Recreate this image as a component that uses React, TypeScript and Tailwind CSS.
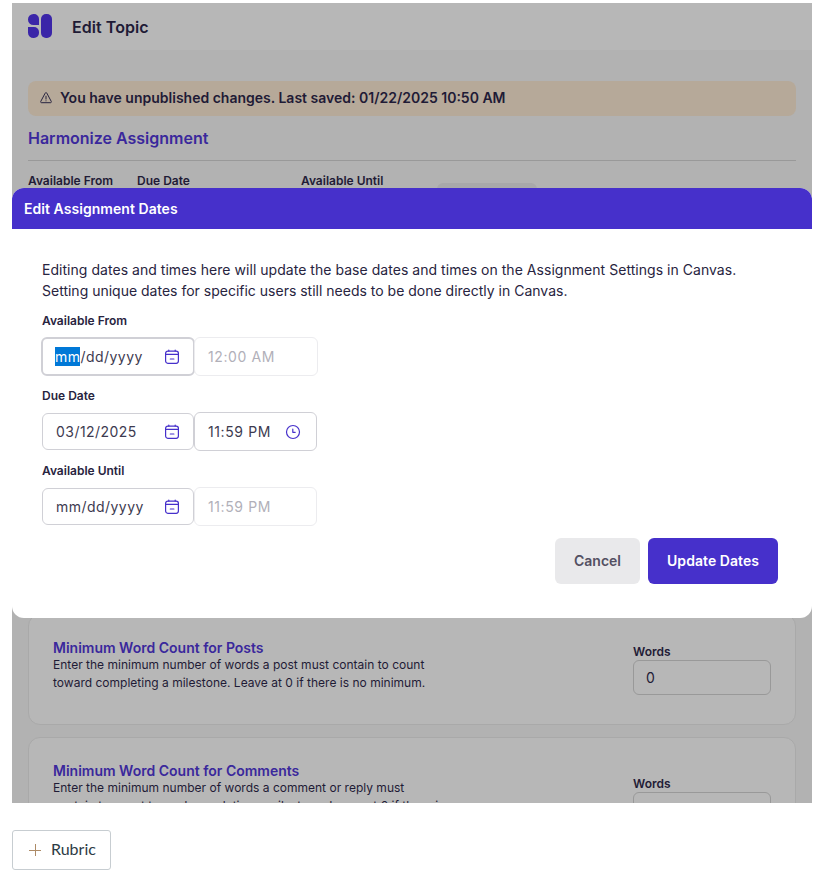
import React from "react";

function Logo() {
  return (
    <svg width="24" height="24" viewBox="0 0 24 24" fill="#3a25a8" className="-mt-[2px] block">
      <path d="M5.5 0h.5a5 5 0 0 1 5 5V11H5.5a5.5 5.5 0 0 1 0-11Z" />
      <path d="M0 13h6a5 5 0 0 1 5 5v1a5 5 0 0 1-5 5H5.5A5.5 5.5 0 0 1 0 18.5V13Z" />
      <rect x="13" y="0" width="11" height="24" rx="5" />
    </svg>
  );
}

function WarningIcon() {
  return (
    <svg width="12" height="12" viewBox="0 0 12 12" fill="none" stroke="#282440" strokeLinejoin="round" strokeLinecap="round" className="block">
      <path d="M5.2 1.1a.9.9 0 0 1 1.6 0l4.5 8.4a.8.8 0 0 1-.7 1.2H1.4a.8.8 0 0 1-.7-1.2Z" />
      <path d="M6 4.2v2.9M6 8.8v.1" />
    </svg>
  );
}

function CalendarIcon() {
  return (
    <svg width="16" height="16" viewBox="0 0 16 16" fill="none" stroke="#4630cb" strokeWidth="1.2" strokeLinecap="round" className="block">
      <rect x="1.6" y="2.1" width="12.8" height="12.2" rx="2.2" />
      <path d="M1.6 5.4h12.8M4.8 1.1v1M11.2 1.1v1M6.3 10h3.6" />
    </svg>
  );
}

function ClockIcon() {
  return (
    <svg width="16" height="16" viewBox="0 0 16 16" fill="none" stroke="#4630cb" strokeWidth="1.2" strokeLinecap="round" strokeLinejoin="round" className="block">
      <circle cx="8" cy="8" r="6.5" />
      <path d="M7.8 5.2v3.1h2.4" />
    </svg>
  );
}

type DateRowProps = {
  label: string;
  date: React.ReactNode;
  time: string;
  focused?: boolean;
  disabled?: boolean;
};

function DateRow({ label, date, time, focused, disabled }: DateRowProps) {
  return (
    <div className="h-[75px]">
      <div className="h-[18px] text-xs leading-[18px] font-semibold">{label}</div>
      <div className="mt-[7px] flex h-[39px] items-center text-sm text-[#3d3a50]">
        <div
          className={
            focused
              ? "-ml-px flex h-[39px] w-[154px] items-center justify-between rounded-md border-2 border-[#d0d0d6] pr-[13px] pl-[12px]"
              : "flex h-[37px] w-[152px] items-center justify-between rounded-md border border-[#d0d0d6] pr-[13px] pl-[13px]"
          }
        >
          <span className="whitespace-nowrap tracking-[0.46px]">{date}</span>
          <CalendarIcon />
        </div>
        <div
          className={
            disabled
              ? `flex h-[39px] items-center rounded-md border border-[#ececef] text-[#b1b0b9] ${focused ? "w-[124px] -ml-px pl-[13px]" : "w-[123px] pl-[13px]"}`
              : "flex h-[39px] w-[123px] items-center justify-between rounded-md border border-[#d0d0d6] pr-[15px] pl-[13px]"
          }
        >
          <span className="whitespace-nowrap tracking-[0.6px]">{time}</span>
          {!disabled && <ClockIcon />}
        </div>
      </div>
    </div>
  );
}

type WordCountCardProps = {
  title: string;
  lines: string[];
  value: string;
  wordsOffset: string;
  height: string;
};

function WordCountCard({ title, lines, value, wordsOffset, height }: WordCountCardProps) {
  return (
    <div className={`flex shrink-0 justify-between rounded-xl border border-[#a9a9a9] bg-[#b7b7b7] pr-[24px] pl-[24px] ${height}`}>
      <div className="pt-[23px]">
        <div className="text-sm leading-5 font-semibold text-[#3a289c]">{title}</div>
        <div className="-mt-[2px] text-xs leading-[18px] tracking-[0.01px] whitespace-nowrap">
          {lines.map((line) => (
            <div key={line}>{line}</div>
          ))}
        </div>
      </div>
      <div className={`w-[138px] ${wordsOffset}`}>
        <div className="h-[17px] text-xs leading-[18px] font-semibold">Words</div>
        <div className="flex h-[35px] items-center rounded-md border border-[#999999] pl-[12px] text-sm">{value}</div>
      </div>
    </div>
  );
}

export default function App() {
  return (
    <div className="h-[883px] w-[824px] overflow-hidden bg-white pt-[3px] pl-3 font-['Inter','Liberation_Sans',sans-serif] text-[#1f1b36]">
      <div className="relative h-[800px] w-[800px] overflow-hidden bg-[#b2b2b2]">
        <div className="flex h-[48px] items-center border-b border-[#b2b2b2] bg-[#b7b7b7] pl-4">
          <Logo />
          <div className="ml-5 text-base font-semibold tracking-[0.05px]">Edit Topic</div>
        </div>
        <div className="flex h-[752px] flex-col px-4 pt-[30px]">
          <div className="flex h-[35px] shrink-0 items-center gap-[8px] rounded-lg bg-[#b6a999] pb-[2px] pl-[12px] text-sm font-semibold">
            <WarningIcon />
            <span>You have unpublished changes. Last saved: 01/22/2025 10:50 AM</span>
          </div>
          <div className="mt-[10px] h-[35px] shrink-0 border-b border-[#999999] text-base leading-6 font-semibold text-[#3a289c]">
            Harmonize Assignment
          </div>
          <div className="flex h-[453px] shrink-0 pt-[11px] text-xs leading-[18px] font-semibold">
            <div className="w-[109px]">Available From</div>
            <div className="w-[164px]">Due Date</div>
            <div className="w-[136px]">Available Until</div>
            <div className="mt-[11px] h-10 w-[100px] rounded-md bg-[#a8a8aa]" />
          </div>
          <WordCountCard
            title="Minimum Word Count for Posts"
            lines={[
              "Enter the minimum number of words a post must contain to count",
              "toward completing a milestone. Leave at 0 if there is no minimum.",
            ]}
            value="0"
            wordsOffset="pt-[28px]"
            height="h-[111px]"
          />
          <div className="h-[12px] shrink-0" />
          <WordCountCard
            title="Minimum Word Count for Comments"
            lines={[
              "Enter the minimum number of words a comment or reply must",
              "contain to count toward completing a milestone. Leave at 0 if there is",
              "no minimum.",
            ]}
            value="0"
            wordsOffset="pt-[37px]"
            height="h-[129px]"
          />
        </div>

        <div className="absolute inset-x-0 top-[185px] h-[430px] overflow-hidden rounded-xl bg-white text-[#282440]">
          <div className="flex h-[41px] items-center bg-[#4630cb] pl-3 text-sm font-semibold tracking-[0.05px] text-white">Edit Assignment Dates</div>
          <div className="px-[30px] pt-[30px]">
            <p className="text-sm leading-[21px]">
              <span className="tracking-[0.037px]">
                Editing dates and times here will update the base dates and times on the Assignment Settings in Canvas.
              </span>
              <br />
              Setting unique dates for specific users still needs to be done directly in Canvas.
            </p>
            <div className="mt-[11px]">
              <DateRow
                label="Available From"
                date={
                  <>
                    <span className="bg-[#0078d7] py-px text-white">mm</span>/dd/yyyy
                  </>
                }
                time="12:00 AM"
                focused
                disabled
              />
              <DateRow label="Due Date" date="03/12/2025" time="11:59 PM" />
              <DateRow label="Available Until" date="mm/dd/yyyy" time="11:59 PM" disabled />
            </div>
          </div>
          <div className="mt-px flex justify-end gap-2 pr-[34px] text-sm font-semibold">
            <button className="h-[46px] w-[85px] rounded-md bg-[#e9e9eb] text-[#535062]">Cancel</button>
            <button className="h-[46px] w-[130px] rounded-md bg-[#4630cb] tracking-[0.05px] text-white">Update Dates</button>
          </div>
        </div>
      </div>

      <button className="mt-[27px] flex h-[40px] w-[99px] items-center rounded-[3px] border border-[#c7cdd1] pb-[2px] pl-[16px] font-['Lato','Liberation_Sans',sans-serif] text-base text-[#2d3b45]">
        <svg width="12" height="12" viewBox="0 0 12 12" stroke="#ad8b67" className="mt-px block">
          <path d="M0 6.5h12M6.5 0v12" />
        </svg>
        <span className="ml-[10px]">Rubric</span>
      </button>
    </div>
  );
}
